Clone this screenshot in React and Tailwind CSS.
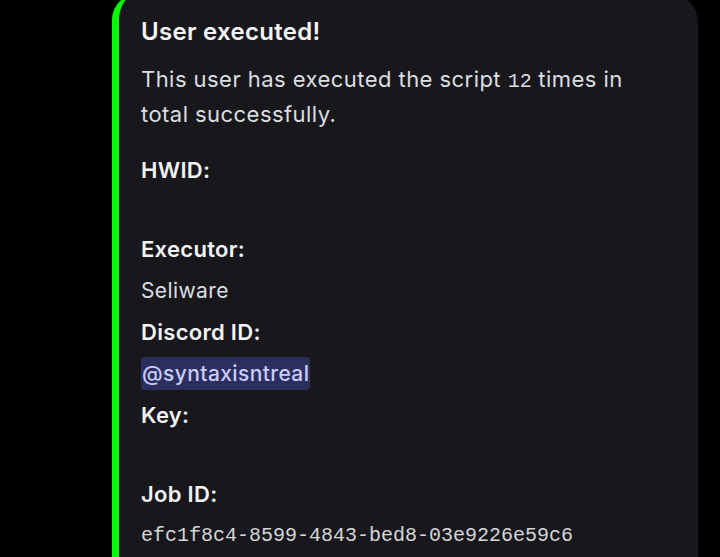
import React from "react";

const fields = [
  { name: "HWID:", value: null },
  { name: "Executor:", value: "Seliware" },
  { name: "Discord ID:", value: "@syntaxisntreal", mention: true },
  { name: "Key:", value: null },
  { name: "Job ID:", value: "efc1f8c4-8599-4843-bed8-03e9226e59c6", mono: true },
];

const Field = ({ field }) => (
  <div>
    <div className="h-[40px] flex items-center text-[22px] tracking-[0.3px] font-semibold text-[#f2f3f5]">
      {field.name}
    </div>
    <div
      className={`${field.value ? "h-[43px]" : "h-[39px]"} flex items-center text-[21px] tracking-[0.4px] text-[#dbdee1]`}
    >
      {field.mention ? (
        <span className="bg-[#2c2f5e] text-[#c9cdfb] rounded-[4px] px-[1px] leading-[33px] font-medium">
          {field.value}
        </span>
      ) : field.mono ? (
        <span
          className="text-[20px] tracking-normal text-[#d4d6da]"
          style={{ fontFamily: '"Liberation Mono", monospace' }}
        >
          {field.value}
        </span>
      ) : (
        field.value
      )}
    </div>
  </div>
);

export default function App() {
  return (
    <div
      className="w-[720px] h-[557px] bg-black overflow-hidden"
      style={{ fontFamily: 'Inter, "Noto Sans", sans-serif' }}
    >
      <div className="ml-[112px] mt-[-6px] w-[586px] bg-[#18181c] border-l-[7px] border-[#00ff00] rounded-tl-[26px] rounded-tr-[28px] pl-[22px] pt-[19px] pb-6">
        <div className="text-[24px] tracking-[0.3px] font-semibold text-[#f2f3f5] leading-[38px]">
          User executed!
        </div>
        <div className="mt-[12px] text-[22px] tracking-[0.45px] text-[#dbdee1] leading-[32px]">
          This user has executed the script{" "}
          <span
            style={{ fontFamily: '"Liberation Mono", monospace' }}
            className="text-[20px] tracking-normal"
          >
            12
          </span>{" "}
          times in
          <br />
          total successfully.
        </div>
        <div className="mt-[20px]">
          {fields.map((f) => (
            <Field key={f.name} field={f} />
          ))}
        </div>
      </div>
    </div>
  );
}
